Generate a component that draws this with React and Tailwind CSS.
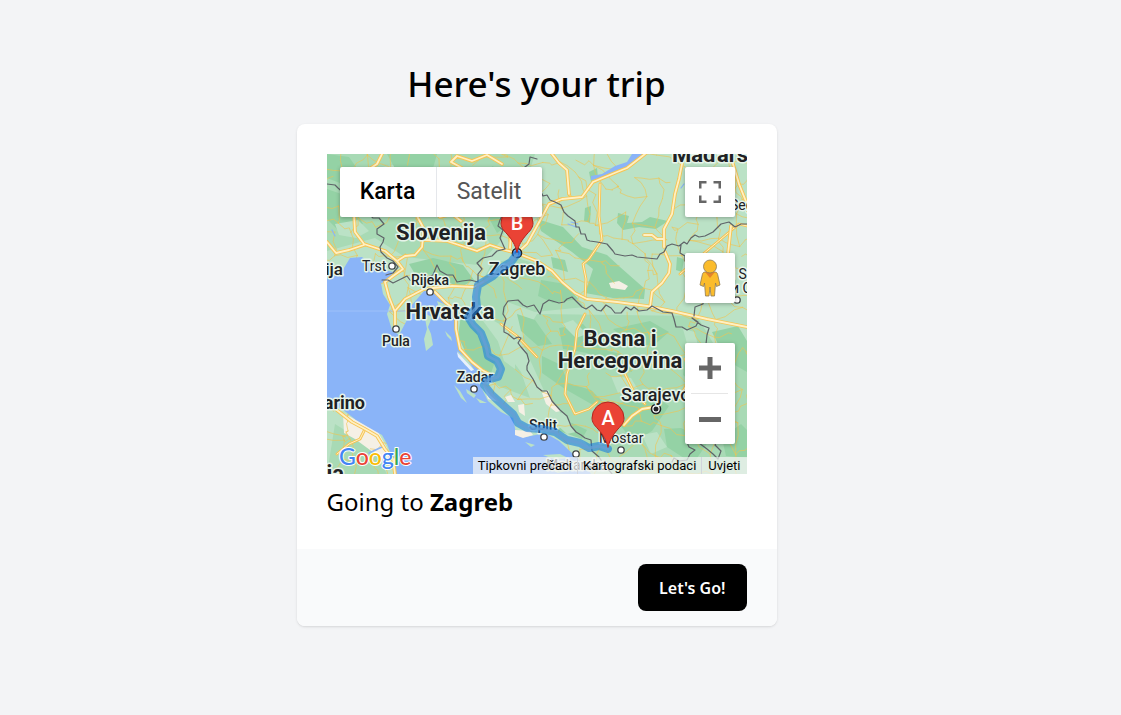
import React from "react";

const ROADS = [
  "M27 60L28 78 37 90 58 97 70 107",
  "M0 88L9 99 22 96 37 91",
  "M70 107L78 102 88 101 95 93 97 75 90 62",
  "M97 86L120 87 135 92 150 97 163 91 178 96 190 99",
  "M70 107L76 115 66 122 58 128 62 143 68 158 68 172",
  "M68 157L78 145 97 135 125 132 147 133 156 128",
  "M108 138L118 148 128 156",
  "M183 94L184 78 182 60",
  "M190 99L200 90 210 72 222 50 235 45 255 43 266 28 290 18 300 14 318 0",
  "M192 100L210 107 225 117 235 128 248 139 260 145 290 148 320 152 345 157 380 165 420 173",
  "M55 0L50 10 38 18 26 24",
  "M175 10L160 1 145 7 130 2 124 8 135 14",
  "M113 63L125 60 134 67",
  "M225 0L232 9 240 16 242 40",
  "M345 60L337 75 337 93M357 0L352 25 348 40 345 60",
  "M338 98L343 110 342 119 335 129 325 138 323 153",
  "M317 81L325 81 330 85 337 85",
  "M403 0L412 30 420 50",
  "M404 72L401 100",
  "M129 158L129 175 133 195 145 208 155 216 166 222",
  "M6 253L25 268 38 275 50 282 58 295 66 305 68 320",
  "M297 271L305 262 315 255 327 253",
];

const SECONDARY = [
  "M242 40L243 42M273 30L272 62 275 86 262 105 256 110 259 125 258 145",
  "M353 120L375 101 400 80 412 70 420 72",
  "M298 220L307 238 318 250",
  "M258 160L250 176 248 195 240 220 238 240 248 260 262 255 270 248",
  "M174 170L190 182 210 203",
  "M38 275L33 285 22 290 10 300",
  "M352 245L365 220 358 205",
];

const BORDERS = [
  "M0 30L8 31 11 34 20 42 32 47 43 61 46 64 52 64 57 70 50 75 50 80 57 84 56 88 53 93 54 98 60 104 66 107 71 113 66 119 59 121",
  "M55 126L61 126 66 129 74 125 80 122 83 126 87 128 98 124 106 121 110 111 113 117 120 121 126 121 130 128 135 127 143 126 151 128 151 120 155 115 150 109 156 104 165 102 170 97 178 95 173 84 176 76 171 72 173 66 176 60 194 16 202 10 203 3 210 5",
  "M207 24L214 38 216 42 220 41 223 46 228 48 234 51 237 58 241 62 248 67 249 73 252 73 254 80 258 80 260 86 263 87 270 88 280 90 286 97 288 100 298 102 305 101 310 103 330 105 333 100 337 98 340 92 345 90 352 92 357 88 360 90 364 84 368 81 372 83 378 82 386 78 394 70 402 68 408 73 414 70 420 70",
  "M354 91L353 99 358 102 358 107 366 112 368 127 377 139 376 150 368 153 367 162",
  "M176 160L177 153 181 147 191 146 196 151 200 153 207 151 213 160 216 150 222 146 232 149 237 148 240 145 245 143 255 153 259 155 265 151 270 156 274 157 279 151 284 154 288 159 294 159 299 153 304 156 307 153 312 157 320 156 325 152 336 158 345 159 347 165 349 173 355 173 360 176 369 172 371 168 365 164 374 171 382 174 380 181 379 190",
  "M176 160L179 165 177 172 177 178 181 180 187 185 191 183 194 184 191 189 194 193 200 200 202 207 200 212 200 216 206 225 210 233 215 237 220 237 225 247 233 256 240 262 244 272 249 278 254 281 258 284 264 286 265 297 272 303 276 309 285 320",
  "M345 308L347 304 352 307 360 306 363 300 368 296 362 293 359 286 365 283 372 289 380 295 386 300 391 305 394 297 388 291 395 280",
];

const FOREST = [
  "M0 0L22 3 34 20 18 31 0 24Z",
  "M60 0L110 0 105 18 86 25 70 18Z",
  "M35 20L90 35 110 55 60 60 24 40Z",
  "M0 35L20 42 36 70 12 77 0 65Z",
  "M82 110L106 104 136 111 147 126 132 134 110 121 88 120Z",
  "M154 20L166 12 174 26 159 33Z",
  "M134 162L147 171 157 194 169 205 164 219 143 208 131 182Z",
  "M157 55L176 44 186 68 170 79Z",
  "M210 65L236 73 255 93 280 101 293 113 318 135 317 145 286 144 258 139 266 115 245 98 214 77Z",
  "M224 103L238 106 241 118 226 114Z",
  "M262 18L270 14 271 24 264 28Z",
  "M258 54L264 52 263 69 257 67Z",
  "M291 59L302 62 300 69 315 68 323 63 341 67 329 75 312 73 296 76 290 69Z",
  "M214 126L238 130 251 145 226 149 211 142Z",
  "M350 103L357 105 355 118 349 116Z",
  "M215 202L234 211 241 229 264 236 282 254 266 251 238 235 215 219Z",
  "M232 174L256 170 281 197 299 201 305 218 281 214 260 199 236 195Z",
  "M286 175L323 167 342 178 326 192 302 188Z",
  "M290 250L323 239 342 252 325 277 307 288 292 270Z",
  "M358 201L379 205 397 224 378 240 356 221Z",
  "M337 275L354 274 381 288 366 310 340 293Z",
  "M385 178L411 172 420 187 420 218 399 206Z",
  "M190 160L208 166 225 190 211 192 194 177Z",
  "M229 276L245 269 260 276 255 285Z",
  "M395 284L414 270 420 276 420 304 399 302Z",
];

const MEADOW = [
  "M0 0L208 0 195 42 173 88 151 111 78 103 48 84 0 97Z",
  "M165 109L190 104 216 112 242 135 258 153 208 158 180 148 176 172 151 158 151 135Z",
  "M210 160L370 162 398 209 420 210 420 320 285 320 251 280 219 241 194 186Z",
  "M130 150L151 160 173 190 194 218 203 244 171 232 138 200Z",
  "M8 270L24 280 48 298 60 320 0 320Z",
];

const PALE = [
  "M46 15L66 11 72 22 56 31Z",
  "M8 70L31 66 42 77 29 84 12 81Z",
  "M113 28L142 23 159 45 143 52 126 44Z",
  "M140 83L157 78 163 90 148 94Z",
  "M235 170L246 166 260 180 249 184Z",
  "M284 222L304 224 310 234 291 239Z",
  "M315 281L330 278 340 293 324 300Z",
  "M356 175L368 178 372 197 361 193Z",
  "M225 266L236 258 249 278 240 280Z",
  "M170 184L188 201 188 215 177 207Z",
];

const ISLANDS = [
  "M97 159L105 163 101 173 104 180 106 191 99 197 97 185 100 175Z",
  "M110 147L119 151 122 157 113 157Z",
  "M118 177L124 183 125 187 120 182Z",
  "M127 231L133 237 140 249 134 244Z",
  "M139 235L149 241 147 244 140 239Z",
  "M149 244L160 249 153 249Z",
  "M151 227L164 238 179 254 188 265 174 258 161 247Z",
  "M130 197L140 205 148 217 138 211Z",
  "M198 288L208 291 204 293Z",
  "M216 301L233 300 241 304 229 306Z",
  "M214 312L238 311 247 315 231 319Z",
];

const SEA =
  "M0 120L14 119 23 104 35 103 43 110 53 115 66 118 63 126 54 129 56 140 63 151 60 160 65 176 72 181 80 166 83 153 91 144 97 137 111 138 119 147 126 154 131 165 130 187 136 201 148 211 160 224 155 231 169 244 186 263 189 280 199 283 218 279 232 287 247 301 260 313 264 320 69 320 66 306 60 290 55 281 41 273 29 266 15 255 0 249Z";

const CITIES = [
  { x: 65, y: 112 },
  { x: 103, y: 138 },
  { x: 69, y: 175 },
  { x: 147, y: 235 },
  { x: 217, y: 283 },
  { x: 249, y: 300 },
  { x: 294, y: 296 },
  { x: 410, y: 146 },
];

const LABELS = [
  { t: "Slovenija", x: 114, y: 86, s: 22, w: 700 },
  { t: "Hrvatska", x: 123, y: 165, s: 22, w: 700 },
  { t: "Bosna i", x: 293, y: 192, s: 22, w: 700 },
  { t: "Hercegovina", x: 293, y: 214, s: 22, w: 700 },
  { t: "Mađarska", x: 345, y: 8, s: 22, w: 700, a: "start" },
  { t: "Zagreb", x: 190, y: 121, s: 18, w: 500 },
  { t: "Sarajevo", x: 294, y: 247, s: 18, w: 500, a: "start" },
  { t: "San Marino", x: 38, y: 255, s: 18, w: 700, a: "end" },
  { t: "Italija", x: 16, y: 121, s: 17, w: 500, a: "end" },
  { t: "Italija", x: 17, y: 327, s: 22, w: 700, a: "end" },
  { t: "Trst", x: 35, y: 117, s: 14, w: 400, a: "start" },
  { t: "Rijeka", x: 103, y: 131, s: 14, w: 500 },
  { t: "Pula", x: 69, y: 192, s: 14, w: 500 },
  { t: "Zadar", x: 148, y: 228, s: 14, w: 500 },
  { t: "Split", x: 216, y: 276, s: 14, w: 500 },
  { t: "Mostar", x: 272, y: 289, s: 14, w: 400, a: "start" },
  { t: "Makarska", x: 219, y: 316, s: 14, w: 400, a: "start" },
  { t: "Segedin", x: 403, y: 56, s: 14, w: 400, a: "start" },
  { t: "Novi Sad", x: 380, y: 125, s: 14, w: 400, a: "start" },
  { t: "Нови Сад", x: 378, y: 139, s: 14, w: 400, a: "start" },
];

const ROUTE =
  "M190 100L184 108 176 113 166 122 151 131 149 143 150 153 141 163 146 171 154 179 159 192 161 202 170 207 174 215 171 223 160 226 157 231 165 241 177 252 186 260 191 269 200 274 214 275 228 278 240 286 253 289 262 294 272 292 281 295";

// Local roads: a seeded, jittered lattice so the network is the same on every render.
function localRoads() {
  let seed = 29;
  const rnd = () => {
    seed = (seed * 16807) % 2147483647;
    return seed / 2147483647;
  };
  const step = 19;
  const cols = 25;
  const rows = 19;
  const pts = [];
  for (let r = 0; r < rows; r++) {
    for (let c = 0; c < cols; c++) {
      pts.push([c * step - 10 + (rnd() - 0.5) * 17, r * step - 10 + (rnd() - 0.5) * 17]);
    }
  }
  let d = "";
  const join = (a, b) => {
    const j = () => (rnd() - 0.5) * 6;
    const p = (k) => [a[0] + (b[0] - a[0]) * k + j(), a[1] + (b[1] - a[1]) * k + j()];
    const [m, n] = [p(0.33), p(0.66)];
    d += `M${a[0].toFixed(1)} ${a[1].toFixed(1)}L${m[0].toFixed(1)} ${m[1].toFixed(1)} ${n[0].toFixed(1)} ${n[1].toFixed(1)} ${b[0].toFixed(1)} ${b[1].toFixed(1)}`;
  };
  for (let r = 0; r < rows - 1; r++) {
    for (let c = 0; c < cols - 1; c++) {
      const i = r * cols + c;
      if (rnd() < 0.58) join(pts[i], pts[i + 1]);
      if (rnd() < 0.58) join(pts[i], pts[i + cols]);
      if (rnd() < 0.12) join(pts[i], pts[i + cols + 1]);
    }
  }
  return d;
}

const LOCAL = localRoads();

function Pin({ x, y, letter }) {
  return (
    <g transform={`translate(${x} ${y})`}>
      <path
        d="M0 0C-2 -8 -5 -12 -10 -18C-14 -22 -16 -25 -16 -29A16 16 0 0 1 16 -29C16 -25 14 -22 10 -18C5 -12 2 -8 0 0Z"
        fill="#ea4335"
        stroke="#b3261e"
      />
      <text y="-22" textAnchor="middle" fontSize="20" fontWeight="500" fill="#fff">
        {letter}
      </text>
    </g>
  );
}

function TripMap() {
  return (
    <svg
      className="block h-full w-full font-['Roboto',sans-serif]"
      viewBox="0 0 420 320"
      preserveAspectRatio="xMidYMid slice"
      strokeLinejoin="round"
      strokeLinecap="round"
    >
      <rect width="420" height="320" fill="#bbe2c6" />
      <path d={MEADOW.join("")} fill="#a8dab5" />
      <path d={FOREST.join("")} fill="#94d2a5" />
      <path d={PALE.join("")} fill="#bbe2c6" />
      <path
        d="M282 129L292 127 301 132 298 136 284 134Z M215 239L221 236 225 248 234 257 229 258 219 250Z M16 259L31 267 51 278 60 294 62 308 43 296 28 285 17 279Z"
        fill="#f5f0e5"
      />
      <path d={LOCAL} fill="none" stroke="#efc452" strokeWidth="0.9" opacity="0.7" />
      <path d={SEA} fill="#8ab4f8" />
      <path d="M264 22L275 20 288 12 300 8 305 0 318 0 307 9 291 17 277 24 264 26Z" fill="#8ab4f8" />
      <path d="M241 70L249 73M244 68L251 70M354 34L357 30M5 76L8 82" stroke="#8ab4f8" strokeWidth="1.2" fill="none" />
      <path d="M42 299L55 293" stroke="#8ab4f8" strokeWidth="1.5" fill="none" />
      <path d={ISLANDS.join("")} fill="#bbe2c6" />
      <path
        d="M156 231L165 239 172 248 161 245Z M178 243L184 241 188 248 181 248Z M191 251L197 250 198 262 192 258Z M188 276L203 277 206 281 196 284 188 281Z"
        fill="#f5f0e5"
      />
      <path d="M130 198L147 216 144 217 131 203Z" fill="#e8f0fe" />
      <path d="M0 157H132" stroke="#9dc0f9" strokeWidth="1" />
      <path d={SECONDARY.join("")} fill="none" stroke="#f6c453" strokeWidth="2.8" />
      <path d={SECONDARY.join("")} fill="none" stroke="#fff0c3" strokeWidth="1" />
      <path d={ROADS.join("")} fill="none" stroke="#f6c453" strokeWidth="3.6" />
      <path d={ROADS.join("")} fill="none" stroke="#fff0c3" strokeWidth="1.8" />
      <path d={BORDERS.join("")} fill="none" stroke="#5f6368" strokeWidth="1.2" />
      {CITIES.map((c) => (
        <circle key={`${c.x}-${c.y}`} cx={c.x} cy={c.y} r="3.200" fill="#fff" stroke="#3c4043" strokeWidth="1.3" />
      ))}
      <circle cx="329" cy="255" r="4.5" fill="#fff" stroke="#202124" strokeWidth="1.6" />
      <circle cx="329" cy="255" r="2.5" fill="#202124" />
      <circle cx="190" cy="99" r="4.5" fill="#8ab4f8" stroke="#202124" strokeWidth="1.6" />
      <circle cx="190" cy="99" r="2.5" fill="#1a56b0" />
      {LABELS.map((l) => (
        <text
          key={l.t + l.y}
          x={l.x}
          y={l.y}
          textAnchor={l.a || "middle"}
          fontSize={l.s}
          fontWeight={l.w}
          fill="#202124"
          stroke="#e6f4ea"
          strokeWidth="3"
          paintOrder="stroke"
        >
          {l.t}
        </text>
      ))}
      <path d={ROUTE} fill="none" stroke="#1a7fe0" strokeWidth="8" opacity="0.6" />
      <path d={ROUTE} fill="none" stroke="#669fd5" strokeWidth="3" opacity="0.8" />
      <Pin x={190} y={98} letter="B" />
      <Pin x={281} y={293} letter="A" />
      <text x="12" y="311" fontSize="23" fontWeight="500" stroke="#fff" strokeWidth="2" paintOrder="stroke" className="font-['Lato',sans-serif]">
        <tspan fill="#4285f4">G</tspan>
        <tspan fill="#ea4335">o</tspan>
        <tspan fill="#fbbc04">o</tspan>
        <tspan fill="#4285f4">g</tspan>
        <tspan fill="#34a853">l</tspan>
        <tspan fill="#ea4335">e</tspan>
      </text>
    </svg>
  );
}

function FullscreenIcon() {
  return (
    <svg width="22" height="22" viewBox="0 0 22 22" fill="none" stroke="#666" strokeWidth="2.500">
      <path d="M1.250 7.500V1.250H7.500M14.500 1.250H20.750V7.500M20.750 14.500V20.750H14.500M7.500 20.750H1.250V14.500" />
    </svg>
  );
}

function PegmanIcon() {
  return (
    <svg width="22" height="38" viewBox="0 0 22 38" strokeLinejoin="round">
      <path
        d="M6 13H16C18 13 18.500 14.500 19 17L21 26L17.500 27.500L16.500 24L15.500 37H12L11 28L10 37H6.500L5.500 24L4.500 27.500L1 26L3 17C3.500 14.500 4 13 6 13Z"
        fill="#fbbc2c"
        stroke="#8d7a55"
        strokeWidth="0.8"
      />
      <path d="M6 13H16L11 19Z" fill="#e5832b" />
      <circle cx="11" cy="7.500" r="6.500" fill="#fbbc2c" stroke="#8d7a55" strokeWidth="0.8" />
    </svg>
  );
}

const control =
  "absolute right-3 flex w-[50px] items-center justify-center rounded-xs bg-white shadow-[0_1px_4px_rgba(0,0,0,0.3)]";

export default function App() {
  return (
    <div className="min-h-screen bg-gray-100 pr-12 font-['Segoe_UI','Noto_Sans',sans-serif] text-black">
      <main className="mx-auto flex w-full max-w-[480px] flex-col pt-[61px]">
        <h1 className="mb-[18px] text-center text-[35px] leading-[45px] font-medium">Here's your trip</h1>
        <section className="overflow-hidden rounded-lg bg-white shadow">
          <div className="p-[30px]">
            <div className="relative h-80 overflow-hidden font-['Roboto',sans-serif]">
              <TripMap />
              <div className="absolute top-[13px] left-[13px] flex h-[50px] rounded-xs bg-white text-[23px] leading-[50px] shadow-[0_1px_4px_rgba(0,0,0,0.3)]">
                <button type="button" className="w-24 font-medium">Karta</button>
                <button type="button" className="w-[106px] border-l border-gray-200 text-[#565656]">Satelit</button>
              </div>
              <button type="button" aria-label="Fullscreen" className={`${control} top-[13px] h-[50px]`}>
                <FullscreenIcon />
              </button>
              <button type="button" aria-label="Street View" className={`${control} top-[99px] h-[50px]`}>
                <PegmanIcon />
              </button>
              <div className={`${control} top-[189px] flex-col`}>
                <button type="button" aria-label="Zoom in" className="flex h-[50px] w-full items-center justify-center">
                  <svg width="22" height="22" viewBox="0 0 22 22" fill="#666">
                    <path d="M8.500 0H13.500V8.500H22V13.500H13.500V22H8.500V13.500H0V8.500H8.500Z" />
                  </svg>
                </button>
                <span className="h-px w-[37px] bg-[#e6e6e6]" />
                <button type="button" aria-label="Zoom out" className="flex h-[50px] w-full items-center justify-center">
                  <svg width="22" height="5" viewBox="0 0 22 5" fill="#666">
                    <path d="M0 0H22V5H0Z" />
                  </svg>
                </button>
              </div>
              <div className="absolute right-0 bottom-0 flex h-[17px] divide-x divide-gray-300 bg-[#f5f5f5]/70 text-[13px] leading-[17px] whitespace-nowrap">
                <button type="button" className="px-[5px]">Tipkovni prečaci</button>
                <span className="px-[5px]">Kartografski podaci</span>
                <a href="#uvjeti" className="px-[6px]">Uvjeti</a>
              </div>
            </div>
            <p className="mt-[10px] text-2xl leading-[35px]">
              Going to <strong className="font-bold">Zagreb</strong>
            </p>
          </div>
          <div className="flex justify-end bg-gray-50 px-[30px] py-[15px]">
            <button type="button" className="h-[47px] rounded-lg bg-black px-[21px] text-base font-semibold text-white">
              Let's Go!
            </button>
          </div>
        </section>
      </main>
    </div>
  );
}
